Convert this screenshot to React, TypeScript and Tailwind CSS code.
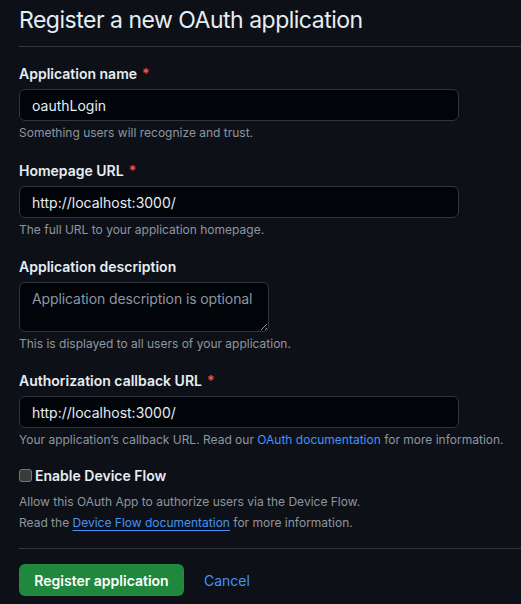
import React from "react";

// GitHub-style dark form for registering a new OAuth application.

function Label({ children, required }: { children: React.ReactNode; required?: boolean }) {
  return (
    <div className="h-[21px] text-[14px] leading-[21px] font-semibold text-[#e6edf3]">
      {children}
      {required && <span className="ml-[5px] text-[#f85149]">*</span>}
    </div>
  );
}

function Note({ children }: { children: React.ReactNode }) {
  return <p className="mt-[3px] text-[12px] leading-[18px] text-[#8d96a0]">{children}</p>;
}

function TextInput({ value }: { value: string }) {
  return (
    <input
      readOnly
      value={value}
      className="mt-[5px] block h-[32px] w-[440px] rounded-[6px] border border-[#30363d] bg-[#010409] px-[12px] text-[14px] text-[#e6edf3] outline-none"
    />
  );
}

export default function App() {
  return (
    <div
      className="min-h-[604px] w-full bg-[#0d1117] pl-[19px] text-[#e6edf3]"
      style={{ fontFamily: "Inter, 'Noto Sans', sans-serif" }}
    >
      <h1 className="border-b border-[#30363d] pt-[3px] pb-[9px] text-[23px] leading-[34px] font-normal tracking-[-0.5px] text-[#e6edf3]">
        Register a new OAuth application
      </h1>

      <form className="pt-[16px]" onSubmit={(e) => e.preventDefault()}>
        <div>
          <Label required>Application name</Label>
          <TextInput value="oauthLogin" />
          <Note>Something users will recognize and trust.</Note>
        </div>

        <div className="mt-[18px]">
          <Label required>Homepage URL</Label>
          <TextInput value="http://localhost:3000/" />
          <Note>The full URL to your application homepage.</Note>
        </div>

        <div className="mt-[17px]">
          <Label>Application description</Label>
          <textarea
            readOnly
            placeholder="Application description is optional"
            className="mt-[5px] block h-[50px] w-[250px] resize rounded-[6px] border border-[#30363d] bg-[#010409] px-[12px] py-[5px] text-[14px] leading-[21px] tracking-[-0.1px] text-[#e6edf3] placeholder-[#8d96a0] outline-none"
          />
          <Note>This is displayed to all users of your application.</Note>
        </div>

        <div className="mt-[17px]">
          <Label required>Authorization callback URL</Label>
          <TextInput value="http://localhost:3000/" />
          <Note>
            Your application’s callback URL. Read our{" "}
            <a className="text-[#4493f8]">OAuth documentation</a> for more information.
          </Note>
        </div>

        <div className="mt-[16px]">
          <label className="flex h-[21px] items-center gap-[3px] text-[14px] font-semibold">
            <span className="block h-[13px] w-[13px] rounded-[3px] border border-[#6e7681] bg-[#3b3b3b]" />
            Enable Device Flow
          </label>
          <p className="mt-[5px] text-[12px] leading-[21px] text-[#8d96a0]">
            Allow this OAuth App to authorize users via the Device Flow.
          </p>
          <p className="text-[12px] leading-[21px] text-[#8d96a0]">
            Read the{" "}
            <a className="text-[#4493f8] underline underline-offset-[3px]">Device Flow documentation</a>{" "}
            for more information.
          </p>
        </div>

        <div className="mt-[15px] border-t border-[#30363d] pt-[15px]">
          <div className="flex items-center gap-[20px]">
            <button
              type="submit"
              className="h-[32px] w-[165px] rounded-[6px] border border-[#2ea04326] bg-[#1f883d] text-[14px] font-semibold text-white"
            >
              Register application
            </button>
            <a className="text-[14px] text-[#4493f8]">Cancel</a>
          </div>
        </div>
      </form>
    </div>
  );
}
